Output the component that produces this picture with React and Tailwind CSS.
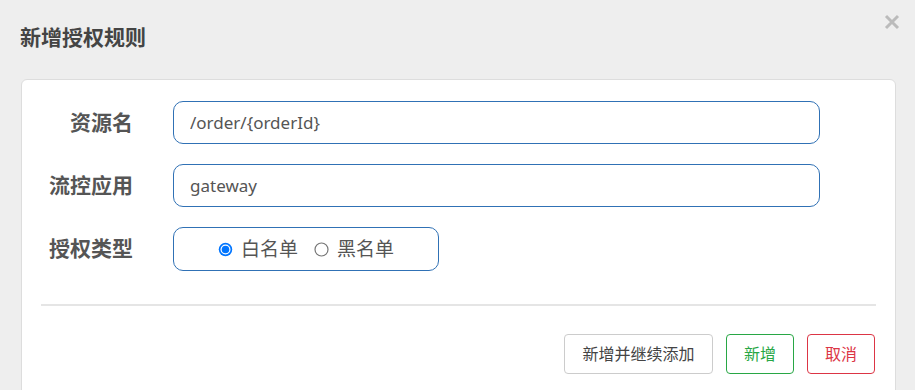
import { useState } from "react";

const font = "font-['Noto_Sans','Noto_Sans_CJK_SC',sans-serif]";

const Row = ({ label, children }) => (
  <div className="flex items-center gap-10">
    <div className="w-[111px] text-right text-[21px] font-bold text-[#555]">{label}</div>
    {children}
  </div>
);

const Radio = ({ checked, label, onClick }) => (
  <label className="flex items-center gap-[8px] cursor-pointer" onClick={onClick}>
    <svg width="15" height="15" viewBox="0 0 15 15">
      {checked ? (
        <>
          <circle cx="7.5" cy="7.5" r="6.75" fill="#0075ff" />
          <circle cx="7.5" cy="7.5" r="5" fill="#fff" />
          <circle cx="7.5" cy="7.5" r="3.8" fill="#0075ff" />
        </>
      ) : (
        <circle cx="7.5" cy="7.5" r="6.5" fill="#fff" stroke="#767676" strokeWidth="1.2" />
      )}
    </svg>
    <span>{label}</span>
  </label>
);

const App = () => {
  const [type, setType] = useState("white");

  return (
    <div className={`w-[915px] h-[390px] overflow-hidden bg-[#eeeeee] ${font}`}>
      <div className="relative px-5 pt-[23px] h-[79px]">
        <h3 className="text-[21px] leading-[28px] font-bold text-[#444]">新增授权规则</h3>
        <button className="absolute right-[14px] top-[13px] text-[#bbb]">
          <svg width="18" height="18" viewBox="0 0 18 18">
            <path d="M3 3L15 15M15 3L3 15" stroke="currentColor" strokeWidth="3" />
          </svg>
        </button>
      </div>

      <div className="ml-[21px] w-[875px] h-[330px] bg-white border border-[#dddddd] rounded-md pt-[21px]">
        <div className="flex flex-col gap-5">
          <Row label="资源名">
            <input
              defaultValue="/order/{orderId}"
              className="w-[647px] h-[43px] px-4 text-[17px] text-[#555] border border-[#3071b5] rounded-[10px] outline-none"
            />
          </Row>
          <Row label="流控应用">
            <input
              defaultValue="gateway"
              className="w-[647px] h-[43px] px-4 text-[17px] text-[#555] border border-[#3071b5] rounded-[10px] outline-none"
            />
          </Row>
          <Row label="授权类型">
            <div className="w-[266px] h-[44px] border border-[#3071b5] rounded-[10px] flex items-center justify-center gap-[16px] text-[19px] text-[#555]">
              <Radio checked={type === "white"} label="白名单" onClick={() => setType("white")} />
              <Radio checked={type === "black"} label="黑名单" onClick={() => setType("black")} />
            </div>
          </Row>
        </div>

        <div className="mx-[19px] mt-[33px] h-[2px] bg-[#e5e5e5]" />

        <div className="flex justify-end gap-[13px] pr-5 mt-[28px] text-[16px]">
          <button className="w-[149px] h-[40px] border border-[#cccccc] rounded text-[#444]">新增并继续添加</button>
          <button className="w-[68px] h-[40px] border border-[#28a745] rounded text-[#28a745]">新增</button>
          <button className="w-[68px] h-[40px] border border-[#dc3545] rounded text-[#dc3545]">取消</button>
        </div>
      </div>
    </div>
  );
};

export default App;
